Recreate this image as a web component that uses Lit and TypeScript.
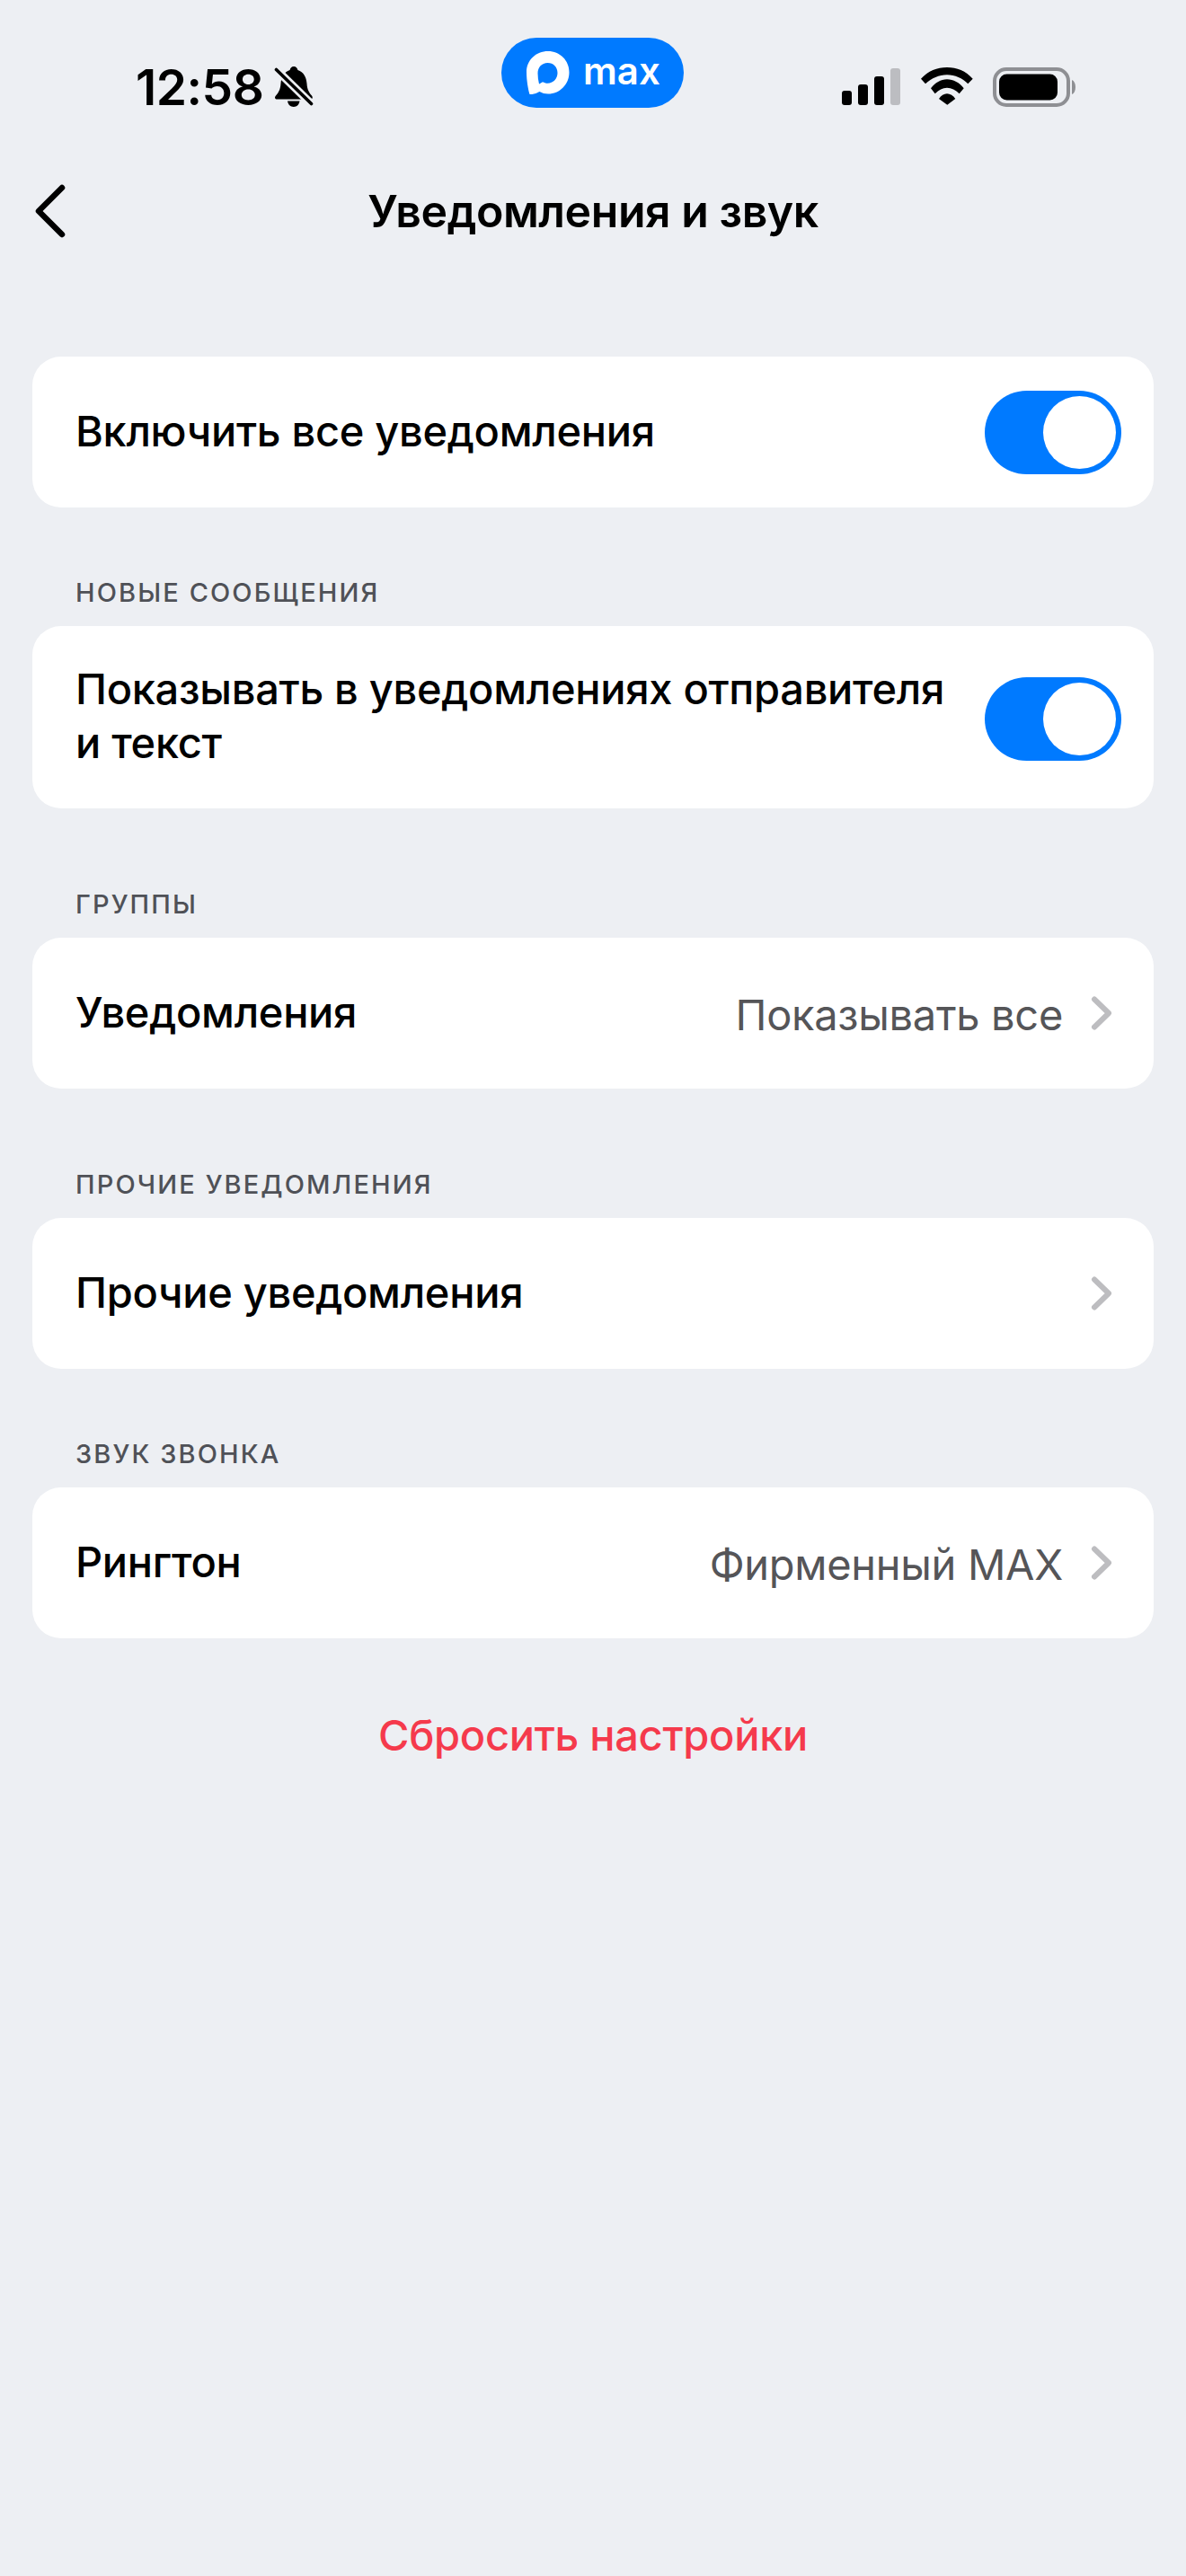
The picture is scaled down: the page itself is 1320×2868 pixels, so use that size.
import { LitElement, html, css, nothing } from "lit";
import { customElement } from "lit/decorators.js";

const chevron = html`<svg class="chev" viewBox="0 0 24 38" width="24" height="38" fill="none" stroke="#bdbdc0" stroke-width="6" stroke-linecap="round" stroke-linejoin="round"><path d="M4 3.500 20 19 4 34.500"/></svg>`;

@customElement("app-toggle")
class AppToggle extends LitElement {
  static styles = css`
    :host { display: block; flex: none; width: 152px; height: 93px; border-radius: 46.5px; background: #007aff; padding: 6px; box-sizing: border-box; }
    .knob { width: 81px; height: 81px; border-radius: 50%; background: #fff; margin-left: auto; }
  `;
  render() { return html`<div class="knob"></div>`; }
}

@customElement("app-root")
class AppRoot extends LitElement {
  static styles = css`
    :host { display: block; width: 1320px; height: 2868px; background: #edeff3; font-family: Inter, "Noto Sans", sans-serif; color: #000; overflow: hidden; }
    .status { position: relative; display: flex; align-items: flex-start; height: 162px; box-sizing: border-box; padding: 75px 122px 0 151px; }
    .clock { display: flex; align-items: center; gap: 12px; height: 44px; font-size: 55px; font-weight: 600; letter-spacing: -0.5px; }
    .pill { position: absolute; left: 558px; top: 42px; width: 203px; height: 78px; border-radius: 39px; background: #007aff; color: #fff; display: flex; align-items: center; gap: 15px; padding-left: 28px; box-sizing: border-box; font-size: 42px; font-weight: 600; }
    .pill span { position: relative; top: -3px; }
    .sys { margin-left: auto; display: flex; align-items: flex-start; }
    .nav { position: relative; display: flex; align-items: center; justify-content: center; height: 146px; }
    .back { position: absolute; left: 36px; top: 42px; }
    .title { font-size: 50px; font-weight: 600; letter-spacing: -0.45px; }
    .content { padding: 89px 36px 0; }
    .card { background: #fff; border-radius: 32px; min-height: 168px; box-sizing: border-box; display: flex; align-items: center; padding: 0 36px 0 48px; }
    .card.tall { height: 203px; }
    .card.tall app-toggle { margin-top: 3px; }
    .label { flex: 1; font-size: 47px; font-weight: 450; line-height: 60px; letter-spacing: -0.3px; margin-top: -3px; }
    .value { font-size: 47px; color: #555558; letter-spacing: -0.3px; margin: 2px 31px 0 0; }
    .chev { flex: none; margin-right: 10px; }
    .head { margin: 80px 48px 22px; font-size: 29px; font-weight: 500; line-height: 30px; color: #4f5157; letter-spacing: 2.1px; }
    .head.wide { margin-top: 92px; }
    .reset { text-align: center; margin-top: 78px; font-size: 47px; font-weight: 450; line-height: 60px; color: #f53a4c; letter-spacing: -0.3px; }
  `;

  private row(label: string, value?: string) {
    return html`<div class="card">
      <div class="label">${label}</div>
      ${value ? html`<div class="value">${value}</div>` : nothing}
      ${chevron}
    </div>`;
  }

  render() {
    return html`
      <div class="status">
        <div class="clock">12:58
          <svg width="44" height="46" viewBox="0 0 44 46">
            <path d="M22 0c2.500 0 4 1.800 4.400 4C33 6 36 12 36.500 19c.4 7 2.500 10 5.500 13.500 1.500 2 .8 4-1.500 4h-37C1 36.500.2 34.500 2 32.500 5 29 7 26 7.500 19 8 12 11 6 17.600 4 18 1.800 19.500 0 22 0Z"/>
            <path d="M15 38.500h13.500c-.4 3.700-3.200 6.500-6.700 6.500s-6.400-2.800-6.800-6.500Z"/>
            <path d="M2 3 42 42" stroke="#edeff3" stroke-width="9"/>
            <path d="M2.500 3.500 41.500 41.500" stroke="#000" stroke-width="3.600" stroke-linecap="round"/>
          </svg>
        </div>
        <div class="pill">
          <svg width="48" height="48" viewBox="0 0 48 48" fill-rule="evenodd">
            <path fill="#fff" d="M24 0C37 0 47.500 10 47.500 23.500 47.500 37 37 47.500 24 47.500c-3.500 0-6.500-.8-9.500-2.500C11 47 6.500 48.500 3.500 48 2 43 0 33 0 23 0 10 10.500 0 24 0ZM23.500 13c-6.500 0-11 5-11 11.500 0 4 .5 8 1.500 12 1.500-.6 3-1.800 4-2.300 1.500.8 3.500 1.500 5.500 1.500 6 0 11-5 11-11.500S30 13 23.500 13Z"/>
          </svg>
          <span>max</span>
        </div>
        <div class="sys">
          <svg width="261" height="44" viewBox="0 0 261 44">
            <g transform="translate(0 1)">
              <rect x="0" y="25" width="11" height="16" rx="3"/>
              <rect x="18" y="18" width="11" height="23" rx="3"/>
              <rect x="36" y="9" width="11" height="32" rx="3"/>
              <rect x="54" y="0" width="11" height="41" rx="3" fill="#bcbdc1"/>
              <path d="M88 11.700C96 3 106-1 117-1s21 4 28.700 12.700l-5.400 5.600C134 11 126 7.300 117 7.300S100 11 93 17.300Z"/>
              <path d="M99 22.300C104 16 110 12.300 117 12.300s14 3.700 18.700 10l-5 6C126.500 24 122 21.700 117 21.700s-9 2.300-13.300 6.600Z"/>
              <path d="M108 34c2.500-3.500 5.500-5.700 9-5.700s6.800 2.200 9.300 5.700l-9 6.700Z"/>
              <rect x="170" y="1" width="82" height="40" rx="13" fill="none" stroke="#8e8f93" stroke-width="4"/>
              <rect x="175" y="6.500" width="65" height="29" rx="8.500"/>
              <path d="M256 13c2.500 1 4 4 4 8s-1.500 7-4 8Z" fill="#8e8f93"/>
            </g>
          </svg>
        </div>
      </div>
      <div class="nav">
        <svg class="back" width="40" height="62" viewBox="0 0 40 62" fill="none" stroke="#000" stroke-width="6.500" stroke-linecap="round" stroke-linejoin="round"><path d="M33 5 7 31l26 26"/></svg>
        <div class="title">Уведомления и звук</div>
      </div>
      <div class="content">
        <div class="card"><div class="label">Включить все уведомления</div><app-toggle></app-toggle></div>
        <div class="head">НОВЫЕ СООБЩЕНИЯ</div>
        <div class="card tall"><div class="label">Показывать в уведомлениях отправителя<br>и текст</div><app-toggle></app-toggle></div>
        <div class="head wide">ГРУППЫ</div>
        ${this.row("Уведомления", "Показывать все")}
        <div class="head wide">ПРОЧИЕ УВЕДОМЛЕНИЯ</div>
        ${this.row("Прочие уведомления")}
        <div class="head">ЗВУК ЗВОНКА</div>
        ${this.row("Рингтон", "Фирменный MAX")}
        <div class="reset">Сбросить настройки</div>
      </div>
    `;
  }
}
